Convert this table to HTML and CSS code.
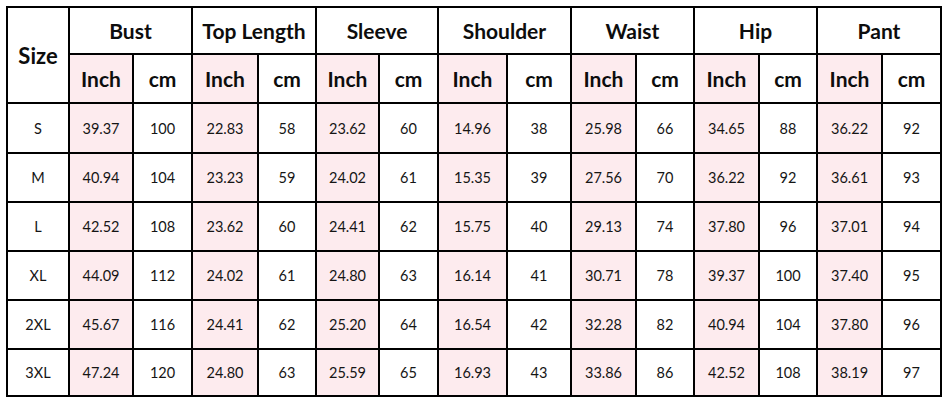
FILE: index.html
```html
<!DOCTYPE html>
<html>
<head>
<meta charset="utf-8">
<link rel="stylesheet" href="styles.css">
</head>
<body>
<div class="page">
<table class="chart">
<colgroup>
<col class="c62"><col class="c64"><col class="c59"><col class="c66"><col class="c58"><col class="c63"><col class="c59"><col class="c69"><col class="c64"><col class="c65"><col class="c58"><col class="c65"><col class="c58"><col class="c65"><col class="c59">
</colgroup>
<thead>
<tr class="h1">
<th rowspan="2" class="size">Size</th>
<th colspan="2">Bust</th>
<th colspan="2">Top Length</th>
<th colspan="2">Sleeve</th>
<th colspan="2">Shoulder</th>
<th colspan="2">Waist</th>
<th colspan="2">Hip</th>
<th colspan="2">Pant</th>
</tr>
<tr class="h2">
<th class="in">Inch</th><th>cm</th>
<th class="in">Inch</th><th>cm</th>
<th class="in">Inch</th><th>cm</th>
<th class="in">Inch</th><th>cm</th>
<th class="in">Inch</th><th>cm</th>
<th class="in">Inch</th><th>cm</th>
<th class="in">Inch</th><th>cm</th>
</tr>
</thead>
<tbody>
<tr class="r50"><td>S</td><td class="in">39.37</td><td>100</td><td class="in">22.83</td><td>58</td><td class="in">23.62</td><td>60</td><td class="in">14.96</td><td>38</td><td class="in">25.98</td><td>66</td><td class="in">34.65</td><td>88</td><td class="in">36.22</td><td>92</td></tr>
<tr><td>M</td><td class="in">40.94</td><td>104</td><td class="in">23.23</td><td>59</td><td class="in">24.02</td><td>61</td><td class="in">15.35</td><td>39</td><td class="in">27.56</td><td>70</td><td class="in">36.22</td><td>92</td><td class="in">36.61</td><td>93</td></tr>
<tr><td>L</td><td class="in">42.52</td><td>108</td><td class="in">23.62</td><td>60</td><td class="in">24.41</td><td>62</td><td class="in">15.75</td><td>40</td><td class="in">29.13</td><td>74</td><td class="in">37.80</td><td>96</td><td class="in">37.01</td><td>94</td></tr>
<tr><td>XL</td><td class="in">44.09</td><td>112</td><td class="in">24.02</td><td>61</td><td class="in">24.80</td><td>63</td><td class="in">16.14</td><td>41</td><td class="in">30.71</td><td>78</td><td class="in">39.37</td><td>100</td><td class="in">37.40</td><td>95</td></tr>
<tr><td>2XL</td><td class="in">45.67</td><td>116</td><td class="in">24.41</td><td>62</td><td class="in">25.20</td><td>64</td><td class="in">16.54</td><td>42</td><td class="in">32.28</td><td>82</td><td class="in">40.94</td><td>104</td><td class="in">37.80</td><td>96</td></tr>
<tr class="r47"><td>3XL</td><td class="in">47.24</td><td>120</td><td class="in">24.80</td><td>63</td><td class="in">25.59</td><td>65</td><td class="in">16.93</td><td>43</td><td class="in">33.86</td><td>86</td><td class="in">42.52</td><td>108</td><td class="in">38.19</td><td>97</td></tr>
</tbody>
</table>
</div>
</body>
</html>
```
FILE: styles.css
```css
html, body {
  margin: 0;
  padding: 0;
  background: #ffffff;
}
.page {
  padding: 6px 0 0 6px;
}
.chart {
  border-collapse: collapse;
  table-layout: fixed;
  width: 936px;
  font-family: Lato, "Open Sans", sans-serif;
  color: #0d0d0d;
  border: 1.5px solid #000;
}
.chart th, .chart td {
  border: 2px solid #000;
  text-align: center;
  vertical-align: middle;
  padding: 0;
}
.chart th {
  font-weight: 700;
  font-size: 21px;
}
.chart td {
  font-size: 14.5px;
  font-weight: 400;
  color: #151515;
}
.chart .size {
  font-size: 22px;
}
.h1 { height: 47px; }
.h2 { height: 49px; }
.chart tbody tr { height: 49px; }
.chart tbody tr.r50 { height: 50px; }
.chart tbody tr.r47 { height: 47px; }
.chart .in { background: #fdebee; }
.c62 { width: 62px; }
.c64 { width: 64px; }
.c59 { width: 59px; }
.c66 { width: 66px; }
.c58 { width: 58px; }
.c63 { width: 63px; }
.c69 { width: 69px; }
.c65 { width: 65px; }
```
